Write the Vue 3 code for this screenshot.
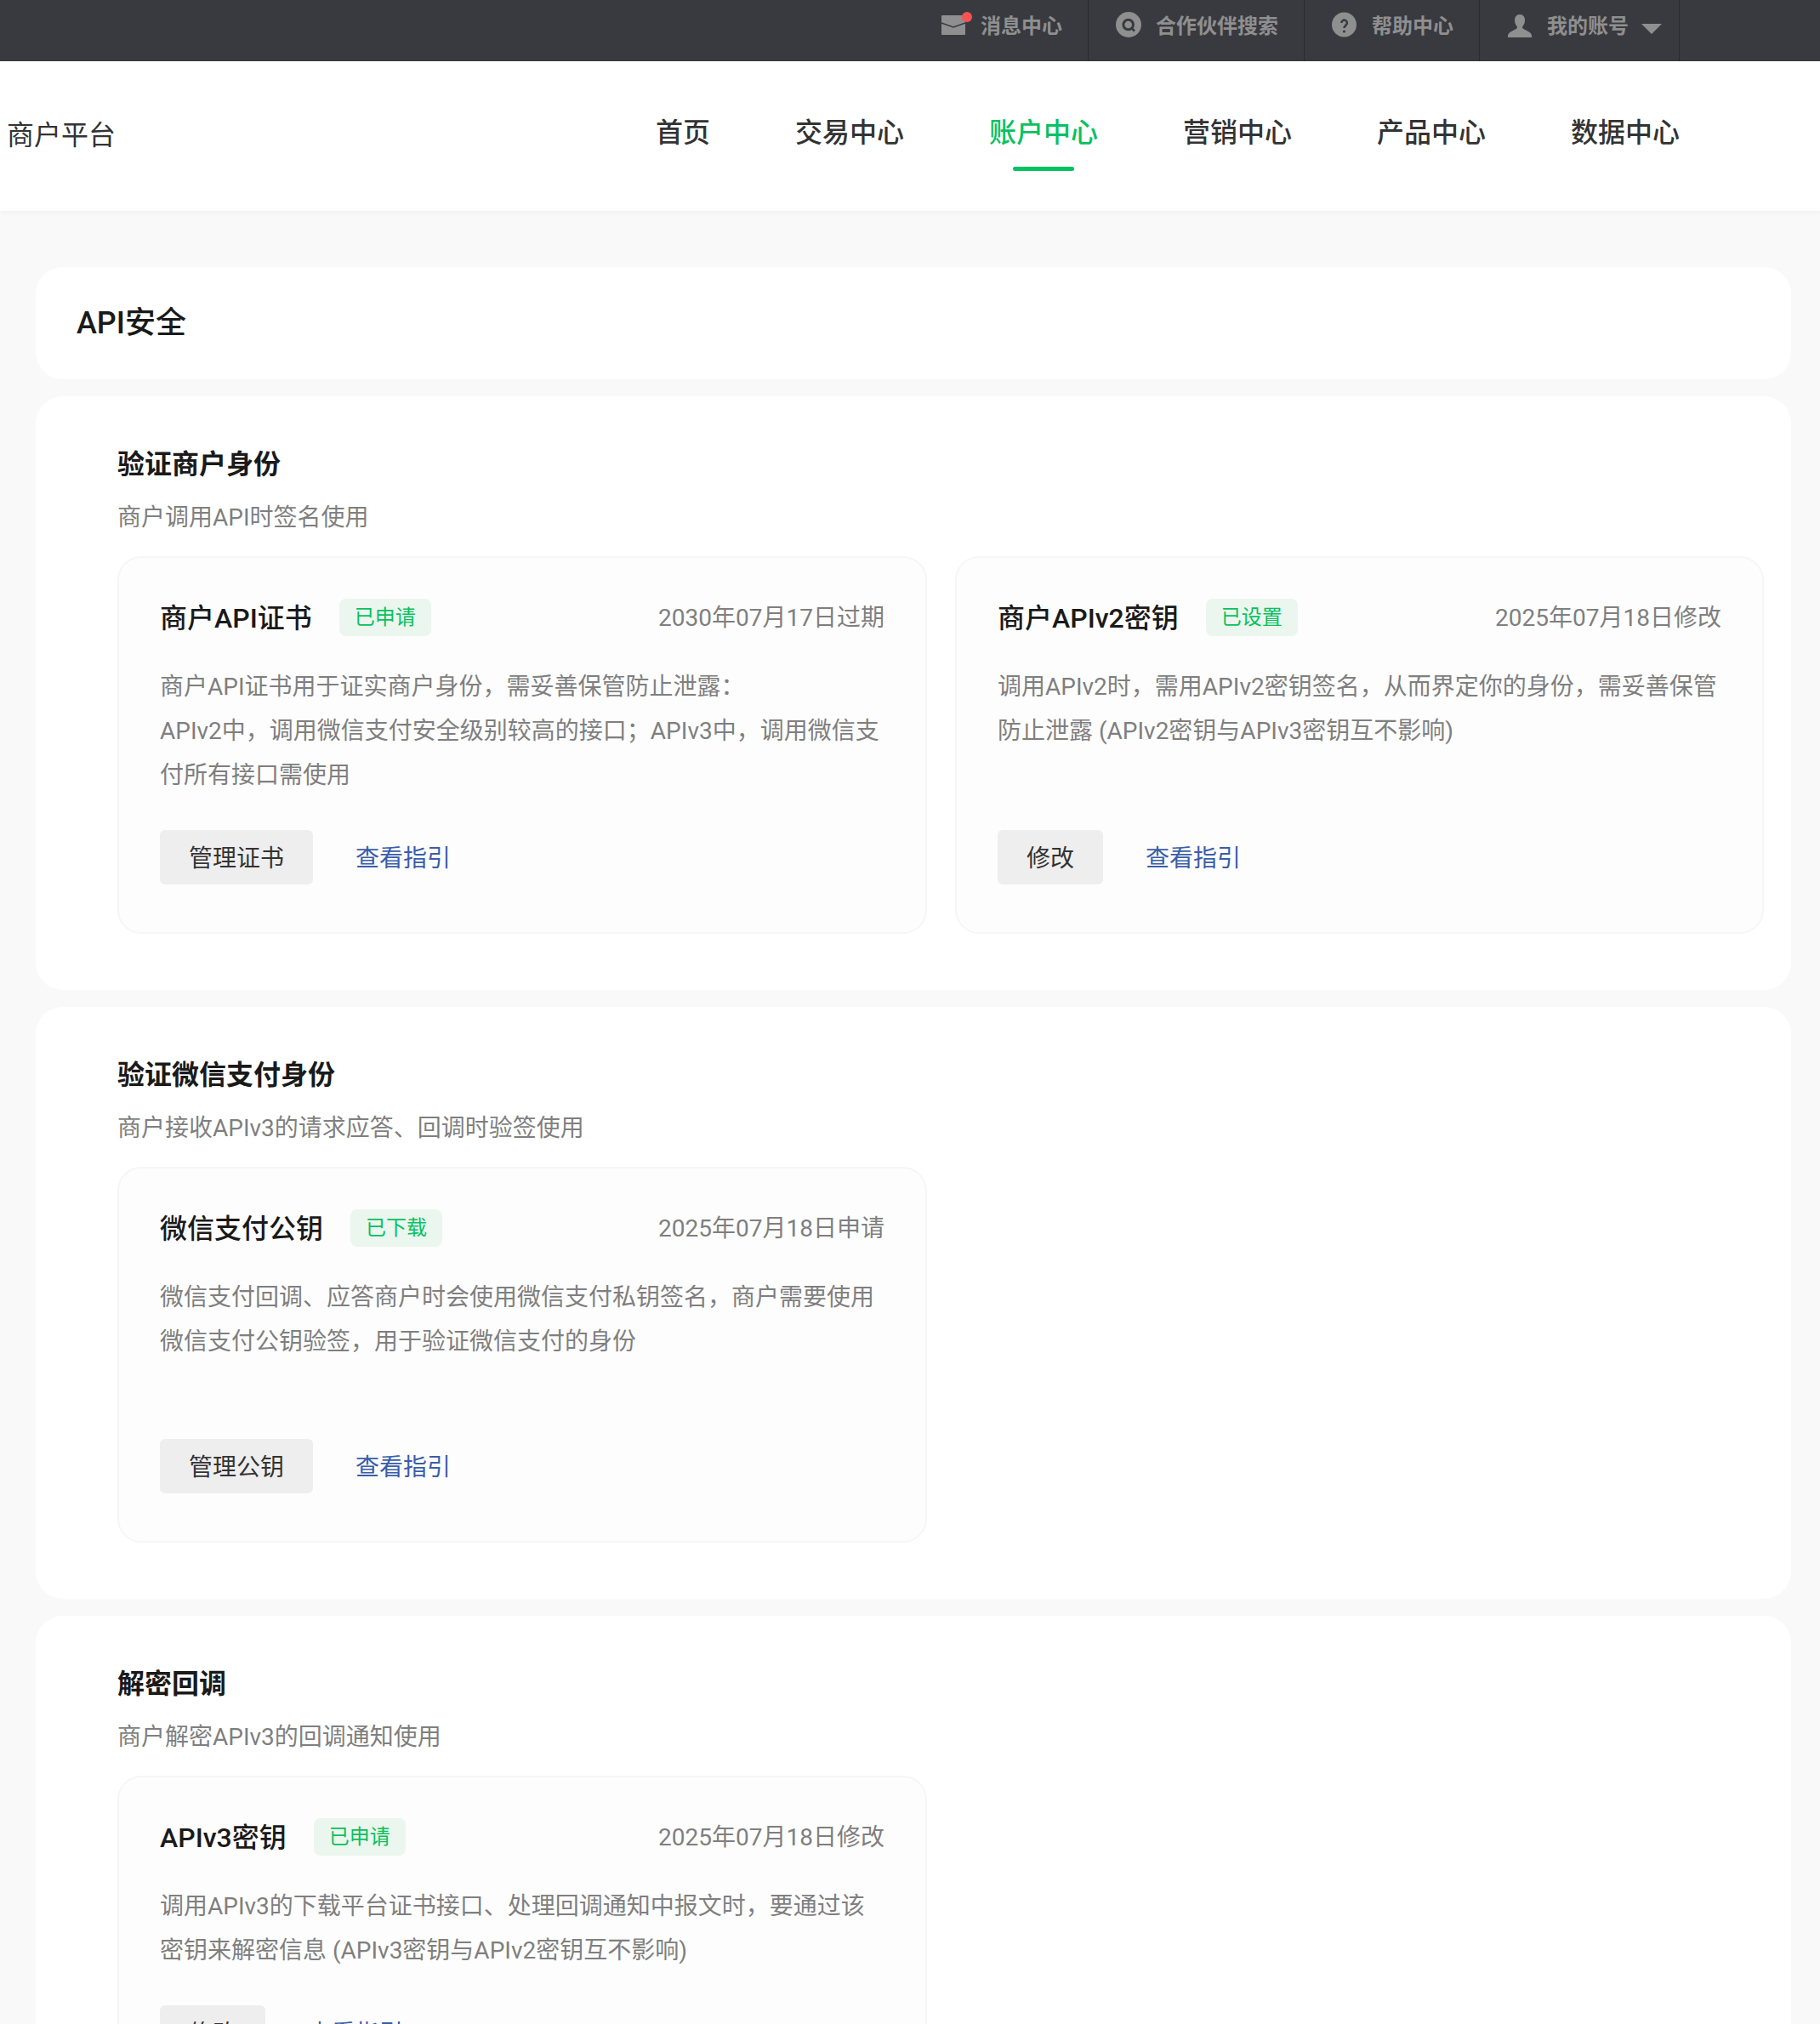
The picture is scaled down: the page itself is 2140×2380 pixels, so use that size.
<script setup>
const navs=["首页","交易中心","账户中心","营销中心","产品中心","数据中心"]
const sections=[
  {
    title:"验证商户身份",
    sub:"商户调用API时签名使用",
    cards:[
      {
        name:"商户API证书",tag:"已申请",date:"2030年07月17日过期",btn:"管理证书",
        lines:["商户API证书用于证实商户身份，需妥善保管防止泄露：","APIv2中，调用微信支付安全级别较高的接口；APIv3中，调用微信支付所有接口需使用"]
      },
      {
        name:"商户APIv2密钥",tag:"已设置",date:"2025年07月18日修改",btn:"修改",
        lines:["调用APIv2时，需用APIv2密钥签名，从而界定你的身份，需妥善保管防止泄露 (APIv2密钥与APIv3密钥互不影响)"]
      }
    ]
  },
  {
    title:"验证微信支付身份",
    sub:"商户接收APIv3的请求应答、回调时验签使用",
    tall:true,
    cards:[
      {
        name:"微信支付公钥",tag:"已下载",date:"2025年07月18日申请",btn:"管理公钥",
        lines:["微信支付回调、应答商户时会使用微信支付私钥签名，商户需要使用微信支付公钥验签，用于验证微信支付的身份"]
      }
    ]
  },
  {
    title:"解密回调",
    sub:"商户解密APIv3的回调通知使用",
    cards:[
      {
        name:"APIv3密钥",tag:"已申请",date:"2025年07月18日修改",btn:"修改",
        lines:["调用APIv3的下载平台证书接口、处理回调通知中报文时，要通过该密钥来解密信息 (APIv3密钥与APIv2密钥互不影响)"]
      }
    ]
  }
]
</script>

<template>
  <div class="page">
    <div class="topbar">
      <div class="top_item">
        <svg class="icon" viewBox="0 0 30 30">
          <rect x="1" y="4" width="28" height="23" rx="1" fill="#8f8f8f"/>
          <path d="M1 13l14 5 14-5" fill="none" stroke="#393a40" stroke-width="1.400"/>
          <circle cx="31" cy="6" r="6" fill="#f85350"/>
        </svg>
        <span class="top_text">消息中心</span>
      </div>
      <div class="top_item">
        <svg class="icon" viewBox="0 0 30 30">
          <circle cx="15" cy="15" r="15" fill="#8f8f8f"/>
          <circle cx="14.700" cy="15" r="5.800" fill="none" stroke="#393a40" stroke-width="3"/>
          <path d="M18.500 19l3.500 3.500" stroke="#393a40" stroke-width="2.600"/>
        </svg>
        <span class="top_text">合作伙伴搜索</span>
      </div>
      <div class="top_item">
        <svg class="icon" viewBox="0 0 30 30">
          <circle cx="14.500" cy="15" r="14.500" fill="#8f8f8f"/>
          <path d="M11.300 13a3.300 3.300 0 1 1 5.600 2.300c-1.300 1.200-2.400 1.600-2.400 3.700" fill="none" stroke="#393a40" stroke-width="2.600"/>
          <circle cx="14.500" cy="23" r="1.600" fill="#393a40"/>
        </svg>
        <span class="top_text">帮助中心</span>
      </div>
      <div class="top_item account">
        <svg class="icon" viewBox="0 0 30 30">
          <path d="M15 3c4 0 6 3 6 7 0 3-1.200 5.300-2.600 7-.8 1-.4 2.300 1 3l6 3.200c2 1 3.600 2.800 3.600 5V30H1v-1.800c0-2.200 1.600-4 3.600-5l6-3.200c1.400-.7 1.800-2 1-3C10.200 15.300 9 13 9 10c0-4 2-7 6-7z" fill="#8f8f8f"/>
        </svg>
        <span class="top_text">我的账号</span>
        <i class="caret"></i>
      </div>
    </div>

    <div class="header">
      <div class="logo">商户平台</div>
      <div class="nav">
        <div v-for="n in navs" :key="n" class="nav_item" :class="{active:n=='账户中心'}">{{n}}</div>
      </div>
    </div>

    <div class="content">
      <div class="panel title_panel">API安全</div>
      <div v-for="s in sections" :key="s.title" class="panel section">
        <div class="sec_title">{{s.title}}</div>
        <div class="sec_sub">{{s.sub}}</div>
        <div class="cards">
          <div v-for="c in s.cards" :key="c.name" class="card" :class="{tall:s.tall}">
            <div class="card_head">
              <span class="card_name">{{c.name}}</span>
              <span class="tag">{{c.tag}}</span>
              <span class="date">{{c.date}}</span>
            </div>
            <div class="card_body">
              <p v-for="l in c.lines" :key="l">{{l}}</p>
            </div>
            <div class="actions">
              <button class="btn">{{c.btn}}</button>
              <a class="link">查看指引</a>
            </div>
          </div>
        </div>
      </div>
    </div>
  </div>
</template>

<style>
body{
  background:#f9f9f9;
}
</style>

<style scoped>
.page{
  width:2140px;
  height:2380px;
  overflow:hidden;
  background:#f9f9f9;
  font-family:Roboto,"Noto Sans CJK SC",sans-serif;
}
.topbar{
  display:flex;
  justify-content:flex-end;
  height:72px;
  padding-right:165px;
  box-sizing:border-box;
  background:#393a40;
  color:#8f8f8f;
  font-size:24px;
  font-weight:600;
}
.top_item{
  display:flex;
  align-items:center;
  gap:17px;
  height:72px;
  padding:0 30px 14px 32px;
  box-sizing:border-box;
  border-right:1px solid #2a2b30;
}
.icon{
  width:30px;
  height:30px;
  overflow:visible;
}
.top_text{
  padding-bottom:2px;
}
.account{
  padding-right:20px;
}
.account .caret{
  width:0;
  height:0;
  margin:10px 0 0 -2px;
  border-left:12px solid transparent;
  border-right:12px solid transparent;
  border-top:12px solid #8f8f8f;
}
.header{
  position:relative;
  display:flex;
  justify-content:space-between;
  height:176px;
  box-sizing:border-box;
  padding:62px 165px 0 8px;
  background:#fff;
  box-shadow:0 2px 6px rgba(0,0,0,0.04);
}
.logo{
  margin-top:3px;
  font-size:32px;
  line-height:44px;
  color:#333;
}
.nav{
  display:flex;
  gap:100px;
}
.nav_item{
  position:relative;
  font-size:32px;
  line-height:44px;
  font-weight:500;
  color:#333;
}
.nav_item.active{
  color:#07c160;
}
.nav_item.active::after{
  content:"";
  position:absolute;
  left:28px;
  right:28px;
  top:62px;
  height:5px;
  border-radius:3px;
  background:#07c160;
}
.content{
  display:flex;
  flex-direction:column;
  gap:20px;
  padding:66px 34px 0 42px;
}
.panel{
  background:#fff;
  border-radius:32px;
}
.title_panel{
  height:132px;
  padding-left:48px;
  font-size:36px;
  font-weight:500;
  line-height:132px;
  color:#1a1a1a;
}
.section{
  padding:58px 32px 66px 96px;
}
.sec_title{
  font-size:32px;
  line-height:44px;
  font-weight:600;
  color:#1a1a1a;
}
.sec_sub{
  margin-top:21px;
  font-size:28px;
  line-height:40px;
  color:#7f7f7f;
}
.cards{
  display:grid;
  grid-template-columns:952px 951px;
  gap:33px;
  margin-top:25px;
}
.card{
  display:flex;
  flex-direction:column;
  padding:48px 48px 56px 48px;
  border:2px solid #f6f6f6;
  border-radius:28px;
  background:#fdfdfd;
}
.card.tall{
  min-height:442px;
  box-sizing:border-box;
}
.card_head{
  display:flex;
  align-items:center;
  height:44px;
}
.card_name{
  padding-bottom:5px;
  font-size:32px;
  font-weight:500;
  color:#1a1a1a;
}
.tag{
  height:44px;
  margin-left:32px;
  padding:0 18px;
  border-radius:8px;
  background:#ebf6ee;
  color:#07c160;
  font-size:24px;
  line-height:44px;
}
.date{
  margin-left:auto;
  padding-bottom:4px;
  font-size:28px;
  color:#7f7f7f;
}
.card_body{
  margin-top:34px;
  margin-bottom:38px;
  font-size:28px;
  line-height:52px;
  color:#7f7f7f;
}
.card_body p{
  margin:0;
}
.actions{
  display:flex;
  align-items:center;
  gap:50px;
  margin-top:auto;
}
.btn{
  height:64px;
  padding:0 34px 2px;
  border:none;
  border-radius:6px;
  background:#eeeeee;
  color:#333;
  font-family:inherit;
  font-size:28px;
}
.link{
  padding-bottom:2px;
  font-size:28px;
  color:#3a5da8;
}
</style>
